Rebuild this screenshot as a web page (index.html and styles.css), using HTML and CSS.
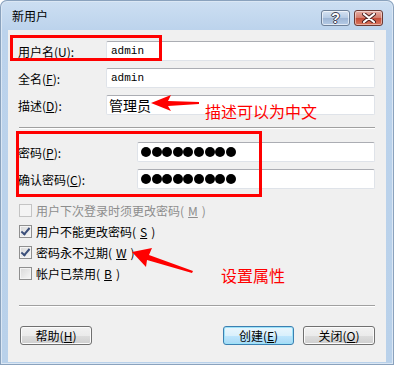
FILE: index.html
```html
<html lang="zh-CN">
<head>
  <meta charset="UTF-8">
  <title>新用户</title>
  <link rel="stylesheet" href="styles.css">
</head>
<body>

  <div class="window">
    <div class="titlebar">
      <span class="title">新用户</span>
      <div class="tb-btn help">?</div>
      <div class="tb-btn close">
        <svg width="14" height="10" viewBox="0 0 14 10">
          <path d="M2 1 L12 9 M12 1 L2 9" stroke="#4a2020" stroke-width="4" stroke-linecap="round"/>
          <path d="M2 1 L12 9 M12 1 L2 9" stroke="#fff" stroke-width="2.2" stroke-linecap="round"/>
        </svg>
      </div>
    </div>

    <div class="panel">
      <div class="fields">
        <div class="row">
          <label>用户名(<u>U</u>):</label>
          <div class="field mono">admin</div>
        </div>
        <div class="row">
          <label>全名(<u>F</u>):</label>
          <div class="field mono">admin</div>
        </div>
        <div class="row">
          <label>描述(<u>D</u>):</label>
          <div class="field cn">管理员</div>
        </div>
      </div>

      <div class="sep top-sep"></div>

      <div class="fields">
        <div class="row wide">
          <label>密码(<u>P</u>):</label>
          <div class="field dots">
            <i></i><i></i><i></i><i></i><i></i><i></i><i></i><i></i><i></i>
          </div>
        </div>
        <div class="row wide">
          <label>确认密码(<u>C</u>):</label>
          <div class="field dots">
            <i></i><i></i><i></i><i></i><i></i><i></i><i></i><i></i><i></i>
          </div>
        </div>
      </div>

      <div class="checks">
        <div class="check disabled"><span class="box"></span>用户下次登录时须更改密码(<u>M</u>)</div>
        <div class="check"><span class="box on"></span>用户不能更改密码(<u>S</u>)</div>
        <div class="check"><span class="box on"></span>密码永不过期(<u>W</u>)</div>
        <div class="check"><span class="box"></span>帐户已禁用(<u>B</u>)</div>
      </div>

      <div class="sep bottom-sep"></div>

      <div class="buttons">
        <div class="btn">帮助(<u>H</u>)</div>
        <div class="spacer"></div>
        <div class="btn default">创建(<u>E</u>)</div>
        <div class="btn">关闭(<u>O</u>)</div>
      </div>
    </div>

    <!-- annotations drawn over the dialog -->
    <div class="mark mark-user"></div>
    <div class="mark mark-pass"></div>
    <div class="note note-desc">描述可以为中文</div>
    <div class="note note-prop">设置属性</div>
    <svg class="arrows" width="394" height="365" viewBox="0 0 394 365">
      <polygon fill="#f00" points="151,103 171,95 168,101 199,102 199,104 168,106 171,111"/>
      <polygon fill="#f00" points="132,252 152,248 149,255 193,271 192,273 147,260 146,267"/>
    </svg>
  </div>

</body>
</html>
```

FILE: styles.css
```css
body {
  margin: 0;
  padding: 0;
  font-family: "Noto Sans CJK SC", "Liberation Sans", sans-serif;
  font-size: 12px;
  color: #000;
  background: #fff;
}

u {
  text-decoration: underline;
  text-underline-offset: 1px;
}

.window {
  position: relative;
  width: 394px;
  height: 365px;
  box-sizing: border-box;
  padding: 0 8px 3px 8px;
  background: linear-gradient(to bottom, #cddff2 0, #bcd3ec 30px, #b9d1ea 100%);
  border-radius: 7px 7px 0 0;
  box-shadow: inset 0 0 0 1px #8aa2bd, inset 0 0 0 2px #dbe7f4;
  overflow: hidden;
}

.titlebar {
  height: 30px;
  display: flex;
  align-items: flex-start;
  padding: 0 3px 0 4px;
}

.title {
  margin-top: 7px;
  flex: 1;
  font-size: 12px;
  line-height: 18px;
}

.tb-btn {
  margin-top: 10px;
  width: 29px;
  height: 16px;
  box-sizing: border-box;
  border: 1px solid #6d7f97;
  border-radius: 3px;
  display: flex;
  align-items: center;
  justify-content: center;
}

.help {
  margin-right: 4px;
  background: linear-gradient(to bottom, #d6e3f2 0, #b6cae3 50%, #9db5d4 51%, #b5cbe6 100%);
  box-shadow: inset 0 0 0 1px rgba(255,255,255,0.6);
  color: #fff;
  font-family: "Liberation Sans", sans-serif;
  font-weight: bold;
  font-size: 14px;
  text-shadow: 0 0 1px #334, 1px 0 0 #445, -1px 0 0 #445, 0 1px 0 #445, 0 -1px 0 #445;
}

.close {
  border-color: #6b3a34;
  background: linear-gradient(to bottom, #e7b0a6 0, #d47b6b 50%, #c44b37 51%, #d9775f 100%);
  box-shadow: inset 0 0 0 1px rgba(255,255,255,0.45);
}

.panel {
  height: 332px;
  box-sizing: border-box;
  background: #f0f0f0;
  padding: 11px 11px 0 10px;
}

.fields {
  display: flex;
  flex-direction: column;
  gap: 7px;
}

.row {
  display: flex;
  align-items: center;
  height: 20px;
}

.row label {
  width: 88px;
  flex: none;
}

.row.wide label {
  width: 119px;
}

.field {
  flex: 1;
  height: 20px;
  box-sizing: border-box;
  background: #fff;
  border: 1px solid #dfe3e9;
  border-top-color: #abadb3;
  border-radius: 2px;
  padding-left: 4px;
  display: flex;
  align-items: center;
}

.mono {
  font-family: "Liberation Mono", monospace;
  font-size: 11px;
}

.cn {
  font-size: 14px;
  padding-left: 2px;
}

.dots {
  gap: 0.6px;
  padding-left: 3px;
}

.dots i {
  width: 10px;
  height: 10px;
  border-radius: 50%;
  background: #000;
}

.sep {
  height: 0;
  border-top: 1px solid #a0a0a0;
  border-bottom: 1px solid #fff;
  margin-left: 1px;
}

.top-sep {
  margin-top: 12px;
  margin-bottom: 13px;
}

.checks {
  margin-top: 11px;
  margin-left: 1px;
}

.check {
  height: 21px;
  display: flex;
  align-items: center;
  gap: 4px;
}

.check.disabled {
  color: #8d8d8d;
}

.box {
  width: 13px;
  height: 13px;
  box-sizing: border-box;
  border: 1px solid #8f8f8f;
  background: linear-gradient(135deg, #d8d8d8, #f7f7f7);
  box-shadow: inset 0 0 0 1px #f4f4f4;
  position: relative;
}

.check.disabled .box {
  border-color: #c4c4c4;
  background: #f4f4f4;
}

.box.on::after {
  content: "";
  position: absolute;
  left: 3px;
  top: 0;
  width: 3px;
  height: 7px;
  border: solid #3b4f7a;
  border-width: 0 2px 2px 0;
  transform: rotate(40deg);
}

.bottom-sep {
  margin-top: 21px;
  margin-bottom: 19px;
}

.buttons {
  display: flex;
  gap: 9px;
  padding-left: 2px;
}

.spacer {
  flex: 1;
}

.btn {
  width: 72px;
  height: 19px;
  box-sizing: border-box;
  border: 1px solid #707070;
  border-radius: 3px;
  background: linear-gradient(to bottom, #f2f2f2 0, #ebebeb 50%, #dddddd 51%, #cfcfcf 100%);
  box-shadow: inset 0 0 0 1px #fbfbfb;
  display: flex;
  align-items: center;
  justify-content: center;
  line-height: 1;
}

.btn.default {
  width: 71px;
  border-color: #3c7fb1;
  background: linear-gradient(to bottom, #eaf6fd 0, #d9f0fc 50%, #bee6fd 51%, #a7d9f5 100%);
  box-shadow: inset 0 0 0 1px #9ce2f8;
}

.mark {
  position: absolute;
  box-sizing: border-box;
  border: 3px solid #f00;
}

.mark-user {
  left: 10px;
  top: 35px;
  width: 152px;
  height: 26px;
}

.mark-pass {
  left: 16px;
  top: 131px;
  width: 246px;
  height: 66px;
}

.note {
  position: absolute;
  color: #f00;
  font-size: 16px;
  line-height: 18px;
}

.note-desc {
  left: 205px;
  top: 102px;
}

.note-prop {
  left: 221px;
  top: 266px;
}

.arrows {
  position: absolute;
  left: 0;
  top: 0;
}
```
